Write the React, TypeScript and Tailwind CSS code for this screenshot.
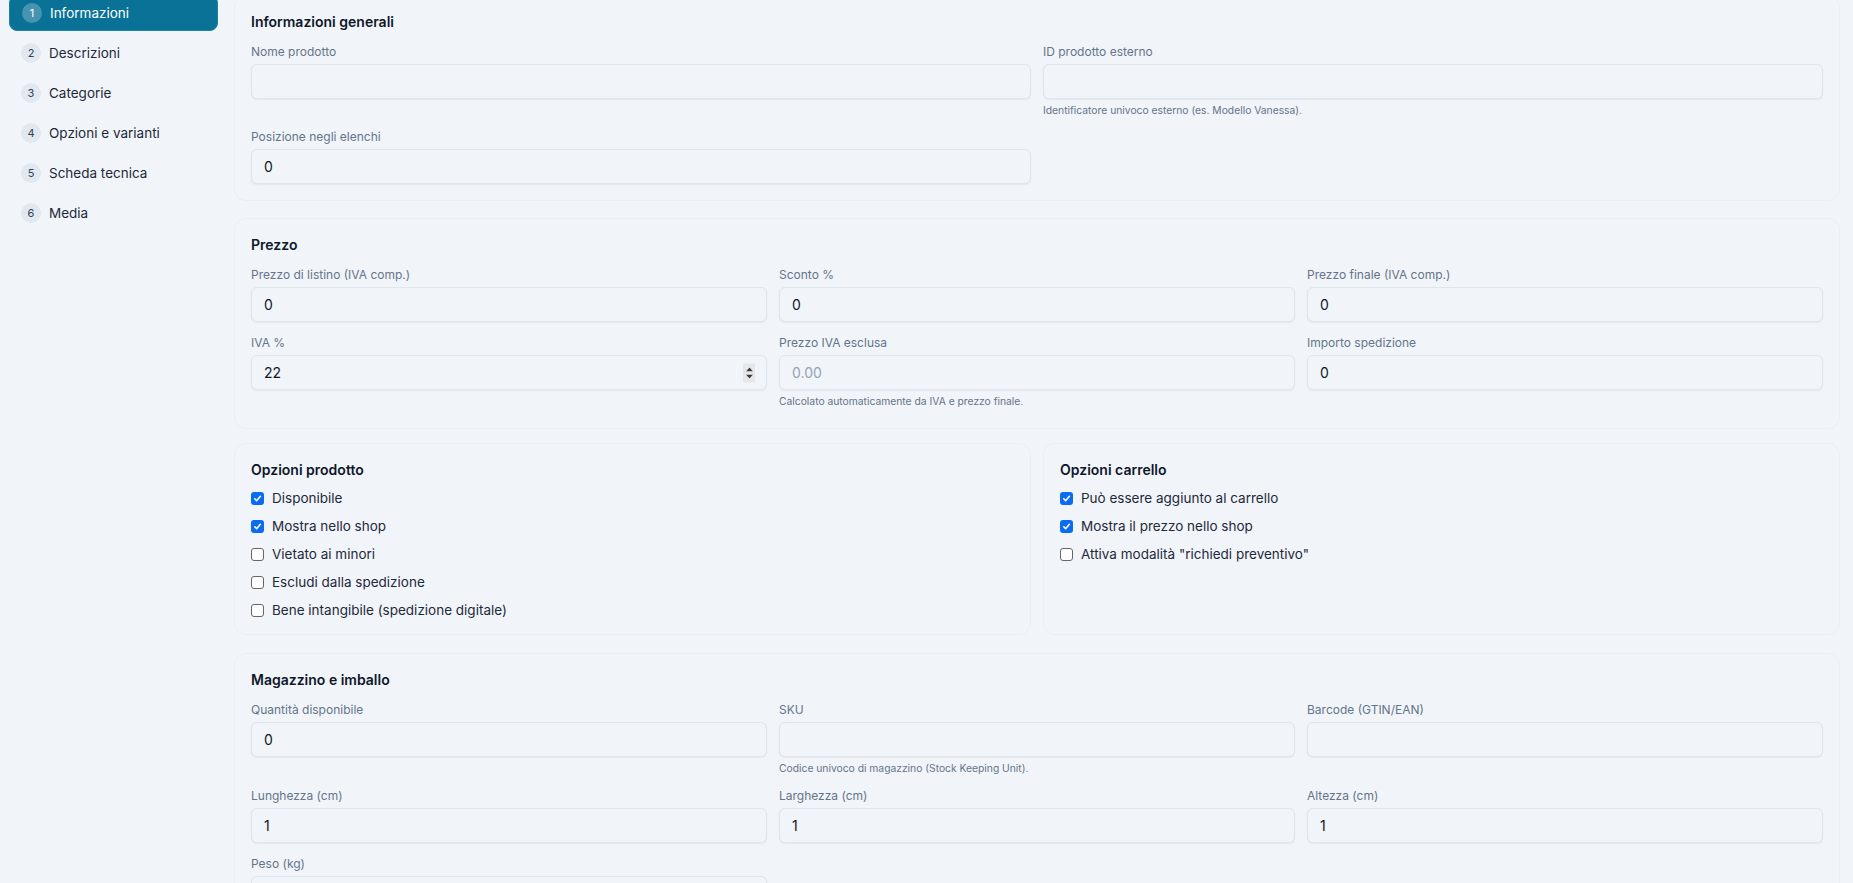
import type { ReactNode } from 'react';

const steps = ['Informazioni', 'Descrizioni', 'Categorie', 'Opzioni e varianti', 'Scheda tecnica', 'Media'];

function Sidebar() {
  return (
    <nav className="w-[209px] shrink-0 flex flex-col gap-1">
      {steps.map((label, i) => {
        const active = i === 0;
        return (
          <div
            key={label}
            className={
              active
                ? 'flex items-center gap-2 h-9 px-3 rounded-lg bg-[#0a7197] border border-[#1b82a8] text-white'
                : 'flex items-center gap-2 h-9 px-3 rounded-lg text-[#1e293b]'
            }
          >
            <span
              className={
                active
                  ? 'w-5 h-5 rounded-full bg-white/25 flex items-center justify-center text-[11px] text-white'
                  : 'w-5 h-5 rounded-full bg-[#e2e8f0] flex items-center justify-center text-[11px] text-[#334155]'
              }
            >
              {i + 1}
            </span>
            <span className="text-[13.5px]">{label}</span>
          </div>
        );
      })}
    </nav>
  );
}

function Card({ title, children, className = '', titleGap = 'mb-3' }: { title: string; children: ReactNode; className?: string; titleGap?: string }) {
  return (
    <section className={`rounded-xl border border-[#ebeff5] bg-[#f1f5f9] px-4 pt-4 pb-4 ${className}`}>
      <h2 className={`text-[14px] leading-5 font-semibold text-[#0f172a] ${titleGap}`}>{title}</h2>
      {children}
    </section>
  );
}

function Spinner() {
  return (
    <span className="absolute right-3 top-1/2 -translate-y-1/2 w-3 h-[19px] bg-[#e6e7e9] flex flex-col items-center justify-center gap-[3px]">
      <svg width="7" height="4" viewBox="0 0 7 4"><path d="M3.5 0L7 4H0z" fill="#3a3a3a" /></svg>
      <svg width="7" height="4" viewBox="0 0 7 4"><path d="M0 0h7L3.5 4z" fill="#3a3a3a" /></svg>
    </span>
  );
}

function Field({
  label,
  value = '',
  placeholder,
  help,
  spinner,
}: {
  label: string;
  value?: string;
  placeholder?: string;
  help?: string;
  spinner?: boolean;
}) {
  return (
    <div className="flex flex-col">
      <label className="text-[12px] leading-4 text-[#64748b] mb-1">{label}</label>
      <div className="relative">
        <input
          readOnly
          value={value}
          placeholder={placeholder}
          className="w-full h-[35px] rounded-md border border-[#dfe5ec] bg-[#f1f5f9] shadow-[0_1px_2px_rgba(15,23,42,0.06)] px-3 text-[14px] text-[#0f172a] placeholder:text-[#94a3b8] outline-none"
        />
        {spinner && <Spinner />}
      </div>
      {help && <p className="mt-1 text-[10.3px] leading-[14px] text-[#64748b]">{help}</p>}
    </div>
  );
}

function Check({ label, checked }: { label: string; checked?: boolean }) {
  return (
    <div className="flex items-center gap-2 h-4">
      {checked ? (
        <span className="w-[13px] h-[13px] rounded-[3px] bg-[#0a6cf2] flex items-center justify-center">
          <svg width="9" height="9" viewBox="0 0 10 10">
            <path d="M2 5.3l2 2.1L8.2 2.6" fill="none" stroke="white" strokeWidth="1.8" strokeLinecap="round" strokeLinejoin="round" />
          </svg>
        </span>
      ) : (
        <span className="w-[13px] h-[13px] rounded-[3px] bg-white border border-[#666]" />
      )}
      <span className="text-[13.5px] text-[#1e293b]">{label}</span>
    </div>
  );
}

export default function App() {
  return (
    <div className="h-screen overflow-hidden bg-[#f1f5f9]" style={{ fontFamily: 'Inter, "Noto Sans", sans-serif' }}>
      <div className="flex gap-4 pl-[9px] pr-[13px] -mt-[5px]">
        <Sidebar />

        <main className="flex-1 flex flex-col">
          <Card title="Informazioni generali">
            <div className="grid grid-cols-2 gap-3">
              <Field label="Nome prodotto" />
              <Field label="ID prodotto esterno" help="Identificatore univoco esterno (es. Modello Vanessa)." />
              <Field label="Posizione negli elenchi" value="0" />
            </div>
          </Card>

          <Card title="Prezzo" className="mt-[17px] pb-5">
            <div className="grid grid-cols-3 gap-x-3 gap-y-[13px]">
              <Field label="Prezzo di listino (IVA comp.)" value="0" />
              <Field label="Sconto %" value="0" />
              <Field label="Prezzo finale (IVA comp.)" value="0" />
              <Field label="IVA %" value="22" spinner />
              <Field label="Prezzo IVA esclusa" placeholder="0.00" help="Calcolato automaticamente da IVA e prezzo finale." />
              <Field label="Importo spedizione" value="0" />
            </div>
          </Card>

          <div className="grid grid-cols-2 gap-3 mt-[14px]">
            <Card title="Opzioni prodotto" titleGap="mb-[10px]">
              <div className="flex flex-col gap-3">
                <Check label="Disponibile" checked />
                <Check label="Mostra nello shop" checked />
                <Check label="Vietato ai minori" />
                <Check label="Escludi dalla spedizione" />
                <Check label="Bene intangibile (spedizione digitale)" />
              </div>
            </Card>
            <Card title="Opzioni carrello" titleGap="mb-[10px]">
              <div className="flex flex-col gap-3">
                <Check label="Può essere aggiunto al carrello" checked />
                <Check label="Mostra il prezzo nello shop" checked />
                <Check label='Attiva modalità "richiedi preventivo"' />
              </div>
            </Card>
          </div>

          <Card title="Magazzino e imballo" className="mt-[18px]">
            <div className="grid grid-cols-3 gap-x-3 gap-y-[13px]">
              <Field label="Quantità disponibile" value="0" />
              <Field label="SKU" help="Codice univoco di magazzino (Stock Keeping Unit)." />
              <Field label="Barcode (GTIN/EAN)" />
              <Field label="Lunghezza (cm)" value="1" />
              <Field label="Larghezza (cm)" value="1" />
              <Field label="Altezza (cm)" value="1" />
              <Field label="Peso (kg)" />
            </div>
          </Card>
        </main>
      </div>
    </div>
  );
}
